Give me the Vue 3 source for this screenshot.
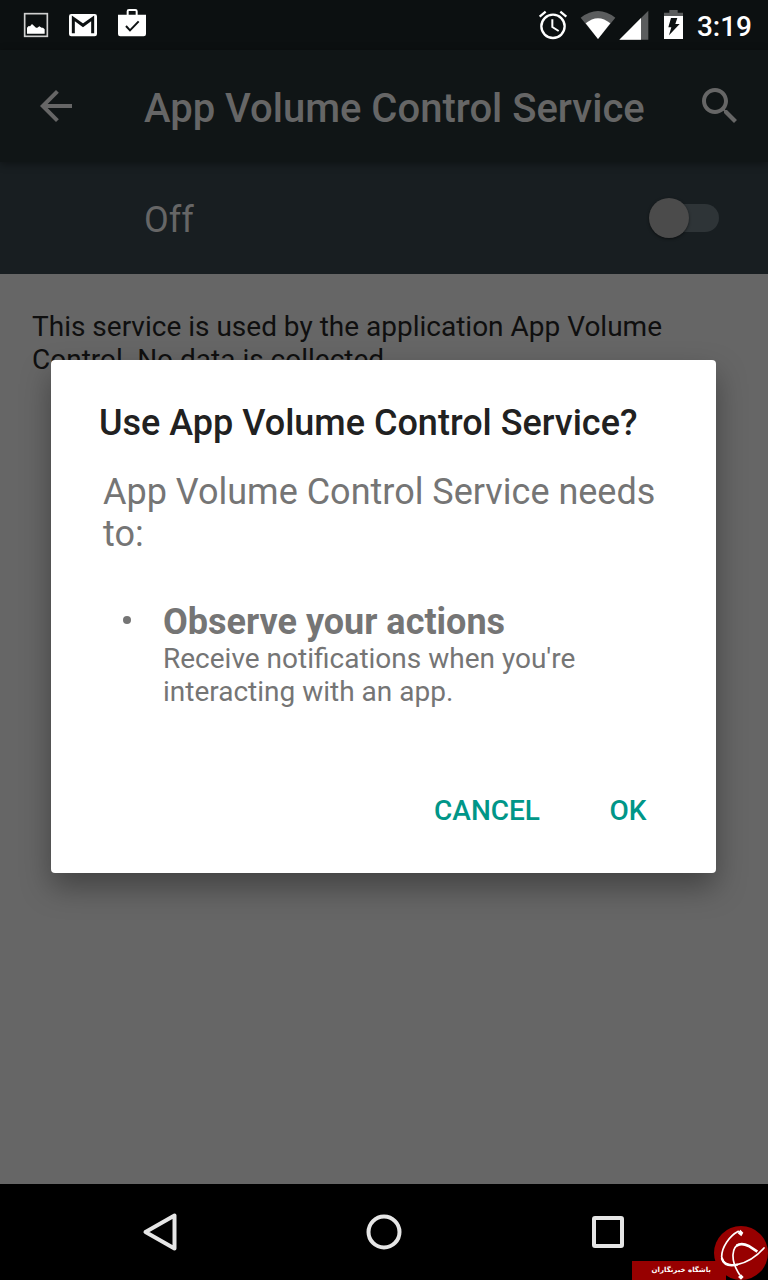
<script setup>
import { ref } from 'vue'

const enabled = ref(false)
const title = 'App Volume Control Service'
</script>

<template>
  <div class="screen">
    <header class="status">
      <div class="notes">
        <svg width="28" height="32" viewBox="66 24 84 96">
          <rect x="74" y="41" width="68" height="68" fill="none" stroke="#d0d0d0" stroke-width="5" />
          <path d="M81 101V83l5-5 4 1 6-7 12 11 4 0 6-4 7 4 4 0 5 5v13z" fill="#fff" />
        </svg>
        <svg width="32" height="32" viewBox="204 24 96 96">
          <rect x="210" y="42" width="84" height="67" rx="7" fill="#fff" />
          <path d="M223 100V55l29 21 29-21v45" fill="none" stroke="#0c1011" stroke-width="9" />
        </svg>
        <svg width="32" height="32" viewBox="348 24 96 96">
          <path d="M383 46V34q0-4 4-4h19q4 0 4 4v12" fill="none" stroke="#fff" stroke-width="6" />
          <path d="M354 44h84v58q0 7-7 7h-70q-7 0-7-7z" fill="#fff" />
          <path d="M378 78l12 13 26-27" fill="none" stroke="#0c1011" stroke-width="6" />
        </svg>
      </div>
      <div class="system">
        <svg class="alarm" width="30" height="32" viewBox="54 24 90 96" fill="none" stroke="#fff">
          <circle cx="99" cy="79" r="35" stroke-width="7" />
          <path d="M97 58v23l19 12" stroke-width="6" />
          <path d="M59 50l18-15M139 50l-18-15" stroke-width="7" />
        </svg>
        <svg class="wifi" width="36" height="32" viewBox="180 24 108 96">
          <path d="M234 117L182 53q52-40 104 0z" fill="#5b5d5e" />
          <path d="M234 117l-37-47q37-31 74 0z" fill="#fff" />
        </svg>
        <svg class="signal" width="30" height="32" viewBox="294 24 90 96">
          <path d="M382 32v87h-87z" fill="#5b5d5e" />
          <path d="M360 54v65h-65z" fill="#fff" />
        </svg>
        <svg class="battery" width="21" height="32" viewBox="429 24 63 96">
          <path d="M432 50V38h16v-8h25v8h16v12z" fill="#5b5d5e" />
          <path d="M432 48h57v69h-57z" fill="#fff" />
          <path d="M453 54h19l-6 18h13l-32 34 7-24h-9z" fill="#0c1011" />
        </svg>
        <time class="clock">3:19</time>
      </div>
    </header>

    <main class="window">
      <div class="appbar">
        <button class="icon" aria-label="Navigate up">
          <svg width="48" height="48" viewBox="0 0 24 24" fill="#666">
            <path d="M20 11H7.83l5.59-5.59L12 4l-8 8 8 8 1.41-1.41L7.83 13H20v-2z" />
          </svg>
        </button>
        <h1>{{ title }}</h1>
        <button class="icon" aria-label="Search">
          <svg width="48" height="48" viewBox="0 0 24 24" fill="#666">
            <path d="M15.5 14h-.79l-.28-.27C15.41 12.59 16 11.11 16 9.5 16 5.91 13.09 3 9.5 3S3 5.91 3 9.5 5.91 16 9.5 16c1.61 0 3.09-.59 4.23-1.57l.27.28v.79l5 4.99L20.49 19l-4.99-5zm-6 0C7.01 14 5 11.99 5 9.5S7.01 5 9.5 5 14 7.01 14 9.5 11.99 14 9.5 14z" />
          </svg>
        </button>
      </div>
      <div class="switchbar">
        <label for="service">{{ enabled ? 'On' : 'Off' }}</label>
        <input id="service" v-model="enabled" type="checkbox" role="switch" />
      </div>
      <p class="about">This service is used by the application App Volume Control. No data is collected.</p>

      <div class="overlay">
        <section class="dialog" role="dialog" aria-labelledby="dialog-title">
          <h2 id="dialog-title">Use {{ title }}?</h2>
          <p class="needs">{{ title }} needs to:</p>
          <ul>
            <li>
              <h3>Observe your actions</h3>
              <p>Receive notifications when you're interacting with an app.</p>
            </li>
          </ul>
          <div class="actions">
            <button>CANCEL</button>
            <button>OK</button>
          </div>
        </section>
      </div>
    </main>

    <nav class="navbar">
      <button aria-label="Back">
        <svg width="40" height="40" viewBox="0 0 40 40"><path d="M34.500 3.500v33L5.500 20z" /></svg>
      </button>
      <button aria-label="Home">
        <svg width="40" height="40" viewBox="0 0 40 40"><circle cx="20" cy="20" r="15.500" /></svg>
      </button>
      <button aria-label="Overview">
        <svg width="40" height="40" viewBox="0 0 40 40"><rect x="6" y="6" width="28" height="28" rx="1" /></svg>
      </button>
    </nav>

    <div class="badge">
      <span dir="rtl" lang="fa">باشگاه خبرنگاران</span>
      <svg width="54" height="54" viewBox="342 108 162 162">
        <circle cx="423" cy="189" r="81" fill="#970000" />
        <g fill="none" stroke="#fff" stroke-linecap="round">
          <path d="M415 124C388 138 365 172 365 200c2 23 22 28 46 24 32-7 60-26 81-50" stroke-width="5" />
          <path d="M366 206c5 18 24 22 45 18" stroke-width="7" />
          <path d="M419 254c-13-19-21-40-20-60 1-15 7-27 18-30" stroke-width="5" />
          <path d="M410 167c12-8 24-5 36 1l26 17" stroke-width="8" stroke-linecap="butt" />
        </g>
        <path d="M421 119l9 9-6 11-11-9zM423 253l8 8-8 8-9-8z" fill="#fff" />
      </svg>
    </div>
  </div>
</template>

<style>
body {
  margin: 0;
  background: #666;
}
</style>

<style scoped>
.screen {
  position: relative;
  display: flex;
  flex-direction: column;
  min-height: 100vh;
  font-family: Roboto, "Liberation Sans", sans-serif;
  background: #666;
}
h1, h2, h3, p, ul {
  margin: 0;
  padding: 0;
}
button {
  padding: 0;
  border: 0;
  background: none;
  font-family: inherit;
}
svg {
  display: block;
  flex: none;
}
.status {
  display: flex;
  justify-content: space-between;
  align-items: center;
  box-sizing: border-box;
  height: 50px;
  padding: 0 16px 2px 22px;
  background: #0c1011;
}
.notes, .system {
  display: flex;
  align-items: center;
}
.notes {
  gap: 17px;
}
.wifi {
  margin-left: 12px;
}
.signal {
  margin-left: 3px;
}
.battery {
  margin-left: 14px;
}
.clock {
  margin-left: 13px;
  padding-top: 6px;
  color: #fff;
  font-size: 28px;
  line-height: 32px;
  font-weight: 500;
}
.window {
  position: relative;
  flex: 1;
}
.appbar {
  position: relative;
  display: flex;
  align-items: center;
  height: 112px;
  padding: 0 24px 0 32px;
  background: #101516;
  box-shadow: 0 2px 8px rgba(0, 0, 0, 0.4);
}
h1 {
  flex: 1;
  padding: 6px 0 0 64px;
  color: #666;
  font-size: 40px;
  line-height: 48px;
  font-weight: 500;
}
.switchbar {
  display: flex;
  align-items: center;
  justify-content: space-between;
  height: 112px;
  padding: 0 49px 0 144px;
  background: #181e21;
}
.switchbar label {
  color: #666;
  font-size: 36px;
  line-height: 42px;
  padding-top: 4px;
}
.switchbar input {
  appearance: none;
  display: grid;
  align-items: center;
  width: 70px;
  height: 40px;
  margin: 0;
}
.switchbar input::before {
  content: "";
  grid-area: 1 / 1;
  height: 28px;
  margin-left: 10px;
  border-radius: 14px;
  background: #2e3437;
}
.switchbar input::after {
  content: "";
  grid-area: 1 / 1;
  width: 40px;
  height: 40px;
  border-radius: 50%;
  background: #4b4b4b;
  box-shadow: 0 1px 3px rgba(0, 0, 0, 0.5);
}
.switchbar input:checked::after {
  justify-self: end;
}
.about {
  padding: 36px 32px;
  color: #0f0f0f;
  font-size: 28px;
  line-height: 33px;
}
.overlay {
  position: absolute;
  inset: 0;
  display: flex;
  align-items: center;
  padding: 0 52px 1px 51px;
}
.dialog {
  flex: 1;
  padding: 42px 24px 27px 48px;
  border-radius: 4px;
  background: #fff;
  box-shadow: 0 14px 30px rgba(0, 0, 0, 0.35);
}
h2 {
  color: #212121;
  font-size: 36px;
  line-height: 42px;
  font-weight: 500;
}
.needs {
  padding: 27px 24px 47px 4px;
  color: #757575;
  font-size: 36px;
  line-height: 42px;
}
ul {
  list-style: none;
  color: #757575;
}
li {
  position: relative;
  padding: 0 48px 0 64px;
}
li::before {
  content: "";
  position: absolute;
  top: 14px;
  left: 24px;
  width: 8px;
  height: 8px;
  border-radius: 50%;
  background: #757575;
}
h3 {
  font-size: 36px;
  line-height: 40px;
  font-weight: 700;
}
li p {
  font-size: 28px;
  line-height: 33px;
}
.actions {
  display: flex;
  justify-content: flex-end;
  gap: 8px;
  margin-top: 66px;
}
.actions button {
  min-width: 128px;
  height: 72px;
  padding: 0 16px;
  color: #009688;
  font-size: 28px;
  font-weight: 500;
}
.navbar {
  display: flex;
  align-items: center;
  height: 96px;
  padding: 0 48px;
  background: #000;
}
.navbar button {
  flex: 1;
  display: flex;
  justify-content: center;
}
.navbar svg {
  fill: none;
  stroke: #e6e6e6;
  stroke-width: 4;
  stroke-linejoin: round;
}
.badge {
  position: absolute;
  right: 0;
  bottom: 0;
  display: flex;
  align-items: flex-end;
}
.badge span {
  margin-right: -12px;
  padding: 0 15px 0 20px;
  background: #970000;
  color: #fff;
  font-family: "DejaVu Sans", sans-serif;
  font-size: 7px;
  line-height: 19px;
  font-weight: 700;
  white-space: nowrap;
}
</style>
